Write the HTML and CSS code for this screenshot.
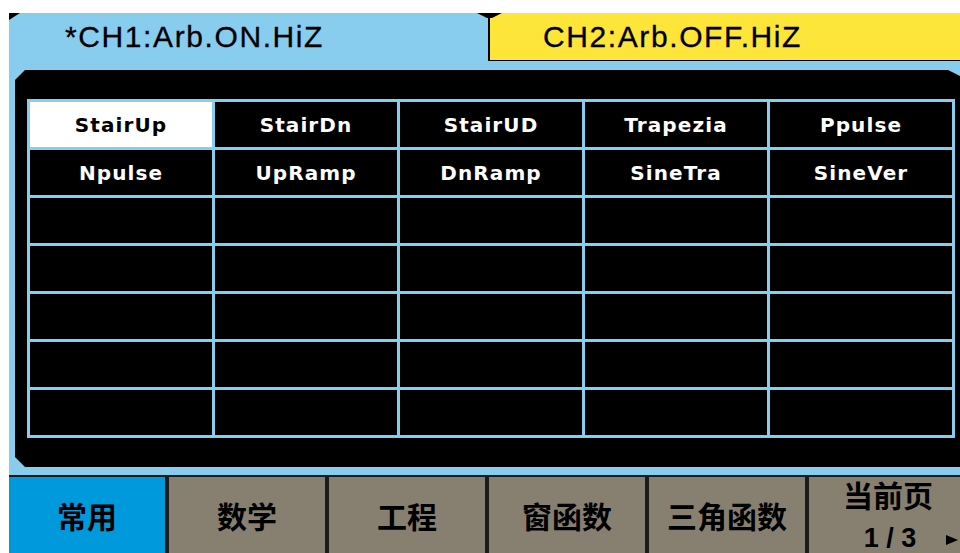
FILE: index.html
```html
<!DOCTYPE html>
<html>
<head>
<meta charset="utf-8">
<link rel="stylesheet" href="styles.css">
</head>
<body>
<div class="screen">
  <div class="corner"></div>
  <div class="tabs">
    <div class="tab tab-ch1">*CH1:Arb.ON.HiZ</div>
    <div class="tab tab-ch2"><span class="tab-cap"></span>CH2:Arb.OFF.HiZ</div>
  </div>
  <div class="panel">
    <div class="grid">
      <div class="cell selected">StairUp</div>
      <div class="cell">StairDn</div>
      <div class="cell">StairUD</div>
      <div class="cell">Trapezia</div>
      <div class="cell">Ppulse</div>
      <div class="cell">Npulse</div>
      <div class="cell">UpRamp</div>
      <div class="cell">DnRamp</div>
      <div class="cell">SineTra</div>
      <div class="cell">SineVer</div>
      <div class="cell"></div><div class="cell"></div><div class="cell"></div><div class="cell"></div><div class="cell"></div>
      <div class="cell"></div><div class="cell"></div><div class="cell"></div><div class="cell"></div><div class="cell"></div>
      <div class="cell"></div><div class="cell"></div><div class="cell"></div><div class="cell"></div><div class="cell"></div>
      <div class="cell"></div><div class="cell"></div><div class="cell"></div><div class="cell"></div><div class="cell"></div>
      <div class="cell"></div><div class="cell"></div><div class="cell"></div><div class="cell"></div><div class="cell"></div>
    </div>
  </div>
  <div class="softkeys">
    <div class="key active">常用</div>
    <div class="key">数学</div>
    <div class="key">工程</div>
    <div class="key">窗函数</div>
    <div class="key">三角函数</div>
    <div class="key key-page">
      <span class="page-title">当前页</span>
      <span class="page-num">1 / 3</span>
      <span class="page-arrow"></span>
    </div>
  </div>
</div>
</body>
</html>
```
FILE: styles.css
```css
html, body {
  margin: 0;
  padding: 0;
  background: #ffffff;
}

.screen {
  position: relative;
  margin: 13px 0 0 9px;
  width: 951px;
  height: 540px;
  background: #88ccee;
  display: flex;
  flex-direction: column;
  overflow: hidden;
}

.corner {
  position: absolute;
  left: 0;
  top: 0;
  width: 11px;
  height: 7px;
  background: #000;
  clip-path: polygon(0 0, 100% 0, 0 100%);
}

.tabs {
  display: flex;
  height: 48px;
  flex: none;
}

.tab {
  font-family: "Liberation Sans", Arial, sans-serif;
  font-size: 30px;
  letter-spacing: 1.6px;
  color: #000;
  white-space: nowrap;
  box-sizing: border-box;
  -webkit-text-stroke: 0.3px #000;
}

.tab-ch1 {
  width: 479px;
  padding-left: 56px;
  line-height: 48px;
}

.tab-ch2 {
  position: relative;
  flex: 1;
  height: 48px;
  background: #fee53a;
  border-left: 2px solid #000;
  border-bottom: 1px solid #000;
  padding-left: 53px;
  line-height: 47px;
}

.tab-cap {
  position: absolute;
  left: -13px;
  top: 0;
  width: 25px;
  height: 5px;
  background: #000;
  clip-path: polygon(0 0, 100% 0, 60% 100%, 40% 100%);
}

.panel {
  flex: none;
  margin-top: 9px;
  margin-left: 6px;
  height: 397px;
  box-sizing: border-box;
  padding: 29px 0 0 12px;
  background: #000;
  clip-path: polygon(10px 0, calc(100% - 12px) 0, 100% 6px, 100% 100%, 10px 100%, 0 calc(100% - 10px), 0 10px);
}

.grid {
  display: grid;
  grid-template-columns: repeat(5, 182px);
  grid-auto-rows: 45px;
  gap: 3px;
  padding: 3px;
  background: #88ccee;
  width: max-content;
}

.cell {
  background: #000;
  color: #fff;
  display: flex;
  align-items: center;
  justify-content: center;
  font-family: "DejaVu Sans", sans-serif;
  font-weight: bold;
  font-size: 20px;
  letter-spacing: 1.1px;
}

.cell.selected {
  background: #fff;
  color: #000;
}

.softkeys {
  flex: none;
  margin-top: 8px;
  border-top: 2px solid #1c1c1c;
  height: 76px;
  display: flex;
  gap: 4px;
  background: #1c1c1c;
}

.key {
  flex: none;
  width: 156px;
  background: #877f70;
  display: flex;
  align-items: center;
  justify-content: center;
  font-family: "Noto Sans CJK SC", sans-serif;
  font-weight: bold;
  font-size: 30px;
  color: #000;
  position: relative;
}

.key.active {
  background: #0099dc;
}

.key-page {
  width: 158px;
  flex-direction: column;
  justify-content: flex-start;
  box-sizing: border-box;
}

.page-title {
  display: block;
  height: 36px;
  line-height: 34px;
  font-size: 30px;
}

.page-num {
  display: block;
  margin-top: 11px;
  font-family: "Liberation Sans", Arial, sans-serif;
  font-weight: bold;
  font-size: 27px;
  line-height: 30px;
  padding-left: 4px;
}

.page-arrow {
  position: absolute;
  left: 137px;
  top: 58px;
  width: 0;
  height: 0;
  border-top: 5px solid transparent;
  border-bottom: 5px solid transparent;
  border-left: 12px solid #000;
}
```
